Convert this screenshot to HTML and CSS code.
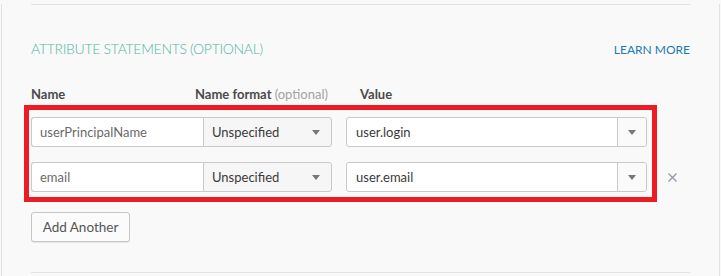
FILE: index.html
```html
<!DOCTYPE html>
<html lang="en">
<head>
    <meta charset="UTF-8">
    <title>Attribute statements</title>
    <link rel="stylesheet" href="styles.css">
</head>
<body>

    <div class="panel">
        <div class="section">
            <div class="section-header">
                <h2>Attribute Statements (optional)</h2>
                <a class="learn-more" href="#">Learn more</a>
            </div>

            <div class="labels">
                <div class="label label-name">Name</div>
                <div class="label label-format">Name format <span class="hint">(optional)</span></div>
                <div class="label label-value">Value</div>
            </div>

            <div class="rows">
                <div class="highlight"></div>

                <div class="attr-row">
                    <div class="name-input">userPrincipalName</div>
                    <div class="format-select">Unspecified<span class="caret"></span></div>
                    <div class="value-combo">
                        <div class="value-text">user.login</div>
                        <div class="value-toggle"><span class="caret"></span></div>
                    </div>
                </div>

                <div class="attr-row">
                    <div class="name-input">email</div>
                    <div class="format-select">Unspecified<span class="caret"></span></div>
                    <div class="value-combo">
                        <div class="value-text">user.email</div>
                        <div class="value-toggle"><span class="caret"></span></div>
                    </div>
                    <span class="remove">
                        <svg width="9" height="9" viewBox="0 0 9 9"><path d="M0.5 0.5 L8.5 8.5 M8.5 0.5 L0.5 8.5" stroke="#8d9bab" stroke-width="1.2" fill="none"/></svg>
                    </span>
                </div>
            </div>

            <button class="add-btn">Add Another</button>
        </div>
        <div class="section-end"></div>
    </div>

</body>
</html>
```

FILE: styles.css
```css
body {
    margin: 0;
    background-color: #f9f9f9;
    font-family: Lato, 'Open Sans', sans-serif;
    color: #333;
}

.panel {
    margin: 0 1px;
    height: 276px;
    border-left: 1px solid #e2e2e2;
    border-right: 1px solid #e2e2e2;
    padding: 0 29px 0 29px;
    box-sizing: border-box;
}

.section {
    margin-top: 4px;
    border-top: 1px solid #e3e3e3;
    padding-top: 34px;
}

.section-header {
    display: flex;
    justify-content: space-between;
    align-items: baseline;
}

h2 {
    margin: 0;
    font-size: 14px;
    line-height: 20px;
    font-weight: 300;
    letter-spacing: -0.3px;
    text-transform: uppercase;
    color: #4fb7a2;
}

.learn-more {
    font-size: 12px;
    color: #1b7ab4;
    text-decoration: none;
    text-transform: uppercase;
}

.labels {
    display: flex;
    margin-top: 26px;
    font-size: 13px;
    line-height: 18px;
    font-weight: 700;
    color: #4a4a4a;
}

.label-name {
    width: 164px;
}

.label-format {
    width: 165px;
}

.hint {
    font-weight: 400;
    color: #a3a3a3;
}

.rows {
    position: relative;
    margin-top: 14px;
}

/* red annotation box over the two rows */
.highlight {
    position: absolute;
    left: -7px;
    top: -12px;
    width: 623px;
    height: 87px;
    border: 5px solid #ed1c24;
    pointer-events: none;
}

.attr-row {
    display: flex;
    align-items: center;
    height: 30px;
    margin-bottom: 15px;
    font-size: 13px;
}

.name-input {
    width: 172px;
    height: 30px;
    line-height: 28px;
    box-sizing: border-box;
    padding-left: 8px;
    background: #fff;
    border: 1px solid #c9c9c9;
    border-right: none;
    border-radius: 3px 0 0 3px;
    color: #6a6a6a;
}

.format-select {
    position: relative;
    width: 129px;
    height: 30px;
    line-height: 28px;
    box-sizing: border-box;
    padding-left: 8px;
    background: #f6f6f6;
    border: 1px solid #c9c9c9;
    border-radius: 0 3px 3px 0;
    color: #3a3a3a;
}

.caret {
    position: absolute;
    top: 12px;
    right: 11px;
    width: 0;
    height: 0;
    border-left: 4px solid transparent;
    border-right: 4px solid transparent;
    border-top: 5px solid #777;
}

.value-combo {
    display: flex;
    width: 301px;
    height: 30px;
    margin-left: 14px;
    box-sizing: border-box;
    background: #fff;
    border: 1px solid #c9c9c9;
    border-radius: 3px;
}

.value-text {
    flex: 1;
    line-height: 28px;
    padding-left: 9px;
    color: #3a3a3a;
}

.value-toggle {
    position: relative;
    width: 28px;
    border-left: 1px solid #c9c9c9;
    background: #fafafa;
    border-radius: 0 3px 3px 0;
}

.value-toggle .caret {
    right: 10px;
}

.remove {
    display: flex;
    margin-left: 21px;
}

.add-btn {
    display: block;
    margin-top: 20px;
    width: 99px;
    height: 30px;
    padding: 0;
    font-family: Lato, 'Open Sans', sans-serif;
    font-size: 13.5px;
    color: #555;
    background: #fbfbfb;
    border: 1px solid #c6c6c6;
    border-radius: 3px;
    box-shadow: 0 1px 0 #e6e6e6;
}

.section-end {
    margin-top: 30px;
    border-top: 1px solid #e3e3e3;
}
```
